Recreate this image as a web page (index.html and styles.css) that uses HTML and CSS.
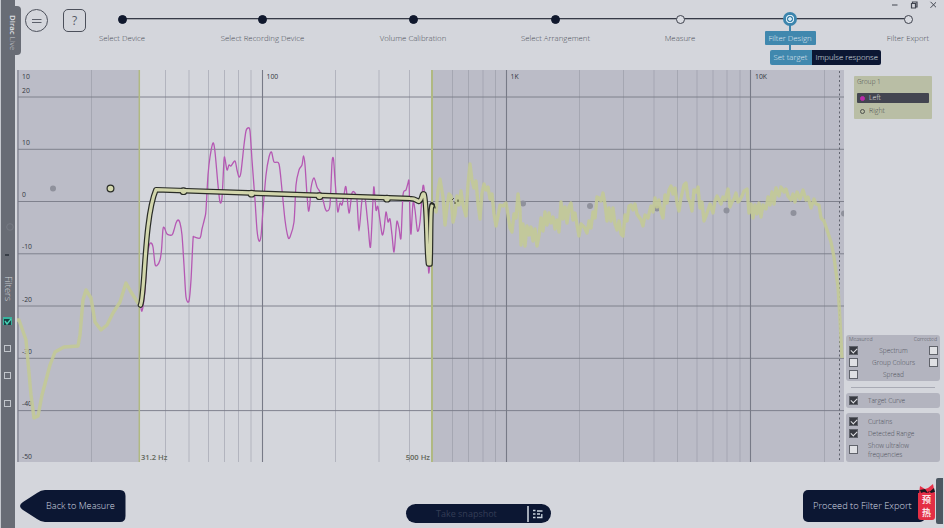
FILE: index.html
```html
<!DOCTYPE html>
<html lang="en">
<head>
<meta charset="utf-8">
<title>Dirac Live</title>
<link rel="stylesheet" href="styles.css">
</head>
<body>
<div class="app">
  <aside class="rail">
    <div class="brand"><b>Dirac</b> Live</div>
    <svg class="rail-marks" width="14" height="40" viewBox="0 0 14 40"><circle cx="9" cy="7" r="3.3" fill="none" stroke="#767a83"/><path d="M4 35h4" stroke="#292f39" stroke-width="1.5"/></svg>
    <div class="rail-title">Filters</div>
    <div class="slots">
      <span class="slot on"><svg width="9" height="9" viewBox="0 0 9 9"><path d="M1 2h7v6H1z" fill="#173f42"/><path d="M2 4l2 3 4-5" fill="none" stroke="#49d2b5" stroke-width="1.4"/></svg></span>
      <span class="slot"></span><span class="slot"></span><span class="slot"></span>
    </div>
  </aside>
  <div class="content">
    <header class="top">
      <div class="tools">
        <span class="tool round"><svg width="10" height="6" viewBox="0 0 10 6"><path d="M0 1.500h9.500M0 4.500h9.500" stroke="#5c606b" stroke-width="1.200"/></svg></span>
        <span class="tool">?</span>
      </div>
      <nav class="steps">
        <div class="step done"><i></i><span>Select Device</span></div>
        <div class="step done"><i></i><span>Select Recording Device</span></div>
        <div class="step done"><i></i><span>Volume Calibration</span></div>
        <div class="step done"><i></i><span>Select Arrangement</span></div>
        <div class="step"><i></i><span>Measure</span></div>
        <div class="step current"><i></i><span>Filter Design</span>
          <div class="tabs"><b>Set target</b><b class="dark">Impulse response</b></div>
        </div>
        <div class="step"><i></i><span>Filter Export</span></div>
      </nav>
      <svg class="window-buttons" width="46" height="10" viewBox="890 0 46 10" fill="none" stroke="#40444f"><path d="M892 5h5.500M930.500 1.800l6 6M936.500 1.800l-6 6"/><path d="M911.500 3.500h4v4.500h-4zM912.500 3V2h4.500v5h-1" stroke-width="1.200"/></svg>
    </header>
    <main class="workspace">
      <svg class="chart" width="827" height="392" viewBox="17 70 827 392">
        <path class="curtain" d="M17 70h122v392H17zM432 70h412v392H432z"/>
        <path class="minor" d="M91.500 70v392M165.500 70v392M189 70v392M208.500 70v392M224.500 70v392M238.500 70v392M251 70v392M335.500 70v392M379 70v392M409.500 70v392M452.500 70v392M468.500 70v392M483 70v392M495.500 70v392M579.500 70v392M623.500 70v392M654 70v392M677.500 70v392M697 70v392M713 70v392M727 70v392M740 70v392M824.500 70v392"/>
        <path class="major" d="M262.500 70v392M506.500 70v392M750.500 70v392M18 70v392"/>
        <path class="rows" d="M18 97h826M18 149.300h826M18 201.500h826M18 253.800h826M18 306h826M18 358.300h826M18 410.600h826"/>
        <path class="limit" d="M139.300 70v392"/><path class="limit wide" d="M432 70v392"/>
        <path class="nyquist" d="M839.500 71v391"/>
        <g class="points"><circle cx="53" cy="188.500" r="3"/><circle cx="523" cy="203.500" r="3"/><circle cx="590" cy="206" r="3"/><circle cx="657" cy="208.500" r="3"/><circle cx="726.500" cy="210.500" r="3"/><circle cx="793.500" cy="213" r="3"/><path d="M844 210.500a3 3 0 0 0 0 6z"/></g>
        <g class="scale">
          <text x="22" y="78.500">10</text><text x="22" y="92.500">20</text><text x="22" y="145">10</text><text x="22" y="197">0</text><text x="22" y="249">-10</text><text x="22" y="301.500">-20</text><text x="22" y="354">-30</text><text x="22" y="406">-40</text><text x="22" y="458.500">-50</text>
          <text x="266.500" y="78.500">100</text><text x="510.500" y="78.500">1K</text><text x="755" y="78.500">10K</text>
        </g>
        <path class="measured" d="M17 320L19 320L26 340L31 395L34 418L38 416L42 395L50 365L55 352L64 347L78 346L80 335L83 300L86 290L91 298L95 322L101 330L107 325L113 313L120 302L126 283L131 292L138 303L140 305"/>
        <path class="measured noisy" d="M434 207L436 212L438 190L440 179L443 197L445 225L447 207L449 194L451 196L453 222L455 214L457 196L459 205L461 191L463 205L466 216L468 184L470 164L472 180L474 188L476 181L478 204L480 219L482 193L484 184L486 190L488 187L490 199L492 194L494 214L496 226L498 216L500 205L503 206L506 203L508 215L510 228L512 232L514 214L516 218L518 194L520 210L521 245L523 224L525 246L527 226L529 235L531 227L533 241L535 229L537 246L539 236L541 218L543 231L545 212L547 225L549 213L551 223L553 217L555 229L557 220L559 232L561 202L563 219L565 207L567 223L569 207L571 203L573 220L575 213L577 225L579 236L581 224L584 227L587 233L589 221L591 228L593 212L595 218L597 197L599 198L601 201L603 193L605 204L607 221L609 208L611 221L613 208L615 224L617 230L619 221L621 234L623 236L625 215L627 221L629 206L631 205L633 210L635 204L637 214L639 217L641 220L643 226L645 215L648 218L651 206L653 212L655 198L657 207L659 200L661 212L663 218L665 195L667 203L669 190L671 186L673 194L675 188L677 203L679 211L681 198L684 185L686 183L688 198L690 202L692 211L694 190L696 192L698 187L700 208L702 202L704 221L706 216L708 210L710 204L713 213L715 201L717 196L719 200L721 204L723 197L725 200L728 189L730 207L732 202L734 199L736 193L738 202L740 200L742 196L744 191L747 189L749 213L751 204L753 218L755 205L757 214L759 203L761 217L763 205L766 209L768 197L770 205L772 192L774 204L776 188L779 196L781 187L784 192L786 189L788 196L791 200L793 194L795 202L797 192L800 199L803 190L806 200L808 197L811 208L814 199L816 204L819 205L821 218L824 221L828 233L831 242L834 257L838 287L840 320L842 358"/>
        <path class="left-channel" data-points="140,302 142,311 145,290 147,258 149,246 151,243 153,247 155,264 157,265.500 160,260 161.500,250 163,229 164.500,228 167,234 172,235 174,230 176,223 178,220 180,223 182,235 184,265 186,297 189,301 191,280 193,240 194,237 200,238 202,229 205,217 206,210 208,175 210,157 213,143 215,152 218,185 220,202 222,198 224,160 225,159 227,170 229,165 231,166 235,161 237,170 239,177 241,172 244,145 246,131 248,128 250,131 252,160 255,200 257,230 259,241 261,236 263,210 266,175 269,157 271.500,152 274,162 279,164 282,190 285,220 288,237 290,237 294,222 296,185 299,170 302,165 303.500,156 305,165 307,195 308.500,211 310,203 311,188 314,178 317,187 320,192 323,200 325,208 327,211 330,205 332,163 333.500,159 335,180 337,205 338,212 340,203 342,205 344,195 346,187 349,213 352,193 355,193 357,200 359,231 362,200 365,198 368,225 370.500,247 373,200 374,187 376,210 378,207 382,234 384,229 386,212 388,222 390,219 392,235 394,252 396,230 397,221 399,228 401,238 403,195 406,190 408,183 409,182 410,215 411,234 413,203 415,210 417.500,231 420,222 423,186 425,200 428,260 428.800,273 430,262"/>
        <g class="target">
          <path class="edge" d="M140.500 305C145 296 144 218 156 189.700L410 198.500C416 198.500 417 201 419 201.500C423 199 421.500 193 424 194C427 200 426.500 250 428.500 264H430C431 245 430 208 432 205"/>
          <g class="edge-dots"><circle cx="183.500" cy="191.200" r="3.300"/><circle cx="251.500" cy="193.700" r="3.300"/><circle cx="319.500" cy="196.200" r="3.300"/><circle cx="387" cy="198.700" r="3.300"/></g>
          <path class="core" d="M140.500 305C145 296 144 218 156 189.700L410 198.500C416 198.500 417 201 419 201.500C423 199 421.500 193 424 194C427 200 426.500 250 428.500 264H430C431 245 430 208 432 206"/>
          <path class="tail" d="M432.500 204Q434.500 204 435 208"/>
          <circle class="handle" cx="110.500" cy="188.500" r="3.400"/>
          <path class="ghost" d="M452.500 199.500l1-1M454.500 203h1M458 200v1.500"/>
        </g>
        <g class="limits"><text x="141" y="459.500">31.2 Hz</text><text x="430" y="459.500" text-anchor="end">500 Hz</text></g>
      </svg>
      <aside class="side">
        <section class="group">
          <h2>Group 1</h2>
          <div class="channel selected"><i></i>Left</div>
          <div class="channel"><i></i>Right</div>
        </section>
        <div class="options">
          <section class="card spectrum">
            <div class="heads"><span>Measured</span><span>Corrected</span></div>
            <div class="opt"><i class="box checked"></i><span>Spectrum</span><i class="box"></i></div>
            <div class="opt"><i class="box"></i><span>Group Colours</span><i class="box"></i></div>
            <div class="opt"><i class="box"></i><span>Spread</span></div>
          </section>
          <hr>
          <section class="card single"><div class="opt left"><i class="box checked"></i><span>Target Curve</span></div></section>
          <section class="card view">
            <div class="opt left"><i class="box checked"></i><span>Curtains</span></div>
            <div class="opt left"><i class="box checked"></i><span>Detected Range</span></div>
            <div class="opt left tall"><i class="box"></i><span>Show ultralow frequencies</span></div>
          </section>
        </div>
      </aside>
    </main>
    <footer class="actions">
      <div class="back"><svg width="106" height="34" viewBox="0 0 106 34"><path d="M25 1H100Q105.500 1 105.500 7V27Q105.500 33 100 33H25Q21 33 17 30L3 21Q-3 17 3 13L17 4Q21 1 25 1z" fill="#0c1733"/></svg><span>Back to Measure</span></div>
      <div class="snapshot"><span>Take snapshot</span><svg width="23" height="18" viewBox="0 0 23 18"><path d="M1 1v16" stroke="#d4dde5" stroke-width="1.500"/><path d="M6 5.500h2.500M6 9h2.500M6 12.500h2.500M10 6h5.500M10 9h3M10 12.500h5.500M14.800 9v3.500" fill="none" stroke="#c9d4dd" stroke-width="1.300"/></svg></div>
      <div class="proceed"><span>Proceed to Filter Export</span></div>
      <div class="sticker"><svg width="19" height="10" viewBox="0 0 19 10"><path d="M1 10L2 2l5 3 3-1 5-4 2 10z" fill="#e82f48"/><path d="M2 6l5-1 3 4 6-5 1 4-4 1-2-2-2 2-3-1-3 1z" fill="#17171e"/></svg><b><span>预</span><span>热</span></b></div>
      <div class="edge-tab"></div>
    </footer>
  </div>
</div>
<script src="chart.js"></script>
</body>
</html>
```

FILE: chart.js
```js
// Draw a smooth curve through the measured points of the left channel.
const trace = document.querySelector('.left-channel');
const pts = trace.dataset.points.split(' ').map(p => p.split(',').map(Number));
let d = `M${pts[0]}`;
for (let i = 0; i < pts.length - 1; i++) {
  const a = pts[Math.max(i - 1, 0)], b = pts[i], c = pts[i + 1];
  const e = pts[Math.min(i + 2, pts.length - 1)];
  const k = 7;
  d += `C${b[0] + (c[0] - a[0]) / k} ${b[1] + (c[1] - a[1]) / k} ` +
       `${c[0] - (e[0] - b[0]) / k} ${c[1] - (e[1] - b[1]) / k} ${c[0]} ${c[1]}`;
}
trace.setAttribute('d', d);
```

FILE: styles.css
```css
* { box-sizing: border-box; }
body { margin: 0; background: #d4d6dc; font-family: "Open Sans", "Noto Sans", sans-serif; font-weight: 300; color: #4b4e58; }
.app { display: flex; width: 944px; height: 528px; overflow: hidden; }
.rail { position: relative; width: 15px; border-left: 1px solid #c5c8ce; background: #686c75; flex: none; display: flex; flex-direction: column; align-items: center; padding-top: 220px; z-index: 2; }
.brand { position: absolute; left: 5px; top: 6px; width: 15px; height: 49px; background: #686c75; border-radius: 0 4px 4px 0; writing-mode: vertical-rl; font-size: 7.800px; line-height: 15px; padding-top: 9px; color: #c8cbd1; padding-right: 1px; white-space: nowrap; }
.brand b { font-weight: 600; color: #e0e2e6; }
.rail-marks { flex: none; }
.rail-title { writing-mode: vertical-rl; font-size: 9.300px; line-height: 14px; color: #d0d3d8; margin-top: 16px; height: 34px; }
.slots { margin-top: 8px; margin-right: 2px; display: flex; flex-direction: column; gap: 20.500px; }
.slot { width: 7px; height: 7px; border: 1px solid #c1c5cb; }
.slot.on { width: 9px; height: 8px; margin: -1px; border: 0; background: #38b39e; display: flex; }
.content { width: 929px; flex: none; display: flex; flex-direction: column; }
.top { position: relative; display: flex; height: 70px; flex: none; }
.tools { display: flex; gap: 15px; width: 67px; padding: 9px 0 0 10px; flex: none; }
.tool { width: 23px; height: 23px; flex: none; border: 1.500px solid #4c505b; border-radius: 5px; display: flex; align-items: center; justify-content: center; font-size: 12px; font-weight: 400; color: #555966; }
.tool.round { border-radius: 50%; }
.steps { position: relative; display: grid; grid-template-columns: 80px 201px 100px 185px 64px 156px 80px; flex: none; }
.steps::before { content: ""; position: absolute; left: 40px; width: 786px; top: 18px; height: 1px; background: #363a47; box-shadow: 0 .5px #72767f; }
.step { position: relative; display: flex; flex-direction: column; align-items: center; font-size: 7.800px; line-height: 14px; white-space: nowrap; }
.step i { width: 9px; height: 9px; margin: 15px 0 7px; border: 1.500px solid #3f434e; border-radius: 50%; background: #dadce2; position: relative; flex: none; }
.step.done i { background: #10182d; border-color: #10182d; }
.step.current i { width: 14px; height: 14px; margin: 12px 0 5px; border: 2px solid #3c85ad; background: radial-gradient(circle, #d8eaf4 0 1.500px, #3c85ad 2px 2.800px, #d8eaf4 3.200px 4px, #3c85ad 4.500px); }
.step.current::before { content: ""; position: absolute; left: 77px; top: 25px; width: 2px; height: 27px; background: #3c85ad; }
.step.current > span { position: relative; background: #4088ae; border-radius: 1px; color: #e0ebf2; width: 51px; text-align: center; height: 14px; }
.tabs { margin: 5px 0 0 70px; display: flex; height: 15px; line-height: 15px; color: #e0e8ee; }
.tabs b { width: 42px; padding-left: 4px; font-weight: 300; background: #4088ae; border-radius: 2px 0 0 2px; }
.tabs .dark { width: 69px; background: #0c1733; border-radius: 0 2px 2px 0; }
.window-buttons { position: absolute; left: 875px; top: 0; }
.workspace { display: flex; height: 392px; flex: none; padding-left: 2px; }
.chart { flex: none; display: block; }
.curtain { fill: #bbbcc7; }
.minor, .major, .rows { fill: none; stroke: #8d909d; }
.minor { stroke-width: .8; opacity: .6; }
.major { stroke: #777a87; stroke-width: 1.100; }
.rows { stroke: #787b87; stroke-width: .9; }
.limit { fill: none; stroke: #b0b982; stroke-width: 1.500; }
.wide { stroke-width: 2; }
.nyquist { stroke: #60636e; stroke-dasharray: 2 2.500; stroke-width: 1; }
.points { fill: #8f919c; }
.scale { font: 400 6.800px "Open Sans", sans-serif; fill: #343741; }
.limits { font: 600 7.600px "Open Sans", sans-serif; fill: #62675a; }
.measured { fill: none; stroke: #c3c996; stroke-width: 3.400; stroke-linejoin: round; opacity: .9; }
.noisy { stroke-width: 3.300; }
.left-channel { fill: none; stroke: #b558b3; stroke-width: 1.300; stroke-linejoin: round; }
.target path { fill: none; stroke-linecap: round; stroke-linejoin: round; }
.target .edge { stroke: #292c27; stroke-width: 5.600; }
.edge-dots { fill: #d2d6ac; stroke: #292c27; stroke-width: 1.200; }
.target .core { stroke: #d2d6ac; stroke-width: 3.200; }
.target .tail { stroke: #292c27; stroke-width: 1.200; }
.handle { fill: #d2d6ac; stroke: #292c27; stroke-width: 1.200; }
.target .ghost { stroke: #353823; stroke-width: 1; }
.side { width: 100px; flex: none; display: flex; flex-direction: column; justify-content: space-between; }
.group { width: 78px; height: 43px; margin: 6px 0 0 10px; background: #b9bea5; padding: 0 3px; border-radius: 1px; font-size: 7px; color: #4c4f50; }
.group h2 { font-size: 6.400px; font-weight: 300; line-height: 12px; margin: 0 0 5px; }
.channel { display: flex; align-items: center; gap: 4px; height: 10px; line-height: 10px; padding-left: 3px; border-radius: 1px; }
.channel i { width: 5px; height: 5px; border: 1px solid #4d504c; border-radius: 50%; }
.channel.selected { background: #434550; color: #e2e4e7; margin-bottom: 3px; }
.selected i { background: #b82baa; border-color: #b82baa; }
.options { width: 94px; margin-left: 2px; }
.card { background: #b3b4bf; border-radius: 3px; font-size: 6.500px; }
.spectrum { height: 46px; }
.heads { display: flex; justify-content: space-between; font-size: 5.200px; line-height: 8px; padding: 0 3px; height: 9px; }
.opt { display: grid; grid-template-columns: 9px 62px 9px; column-gap: 4.500px; padding-left: 3px; height: 12.200px; align-items: center; text-align: center; }
.opt.left { grid-template-columns: 9px 60px; column-gap: 10px; text-align: left; }
.box { width: 9px; height: 9px; border: 1px solid #60636b; background: #dfe0e4; display: block; }
.checked { background: #383a41; position: relative; }
.checked::after { content: ""; position: absolute; left: 1px; top: 1px; width: 5px; height: 3px; border-left: 1.500px solid #dfe0e4; border-bottom: 1.500px solid #dfe0e4; transform: rotate(-45deg); }
hr { border: 0; height: 1px; background: #a8aab4; margin: 5.500px 5px 5.500px; }
.single { height: 15px; padding-top: 1.500px; margin-bottom: 5px; }
.view { height: 49px; padding-top: 2px; }
.opt.tall { height: 21px; line-height: 9px; }
.actions { position: relative; height: 66px; display: flex; align-items: flex-start; flex: none; padding-left: 5px; }
.back { display: grid; width: 106px; margin-top: 27px; flex: none; font-size: 9.200px; line-height: 34px; color: #d5dae2; }
.back > * { grid-area: 1 / 1; }
.back span { padding-left: 26px; white-space: nowrap; }
.snapshot { width: 145px; height: 19px; margin: 42px 0 0 280px; background: #0c1733; border-radius: 10px; flex: none; display: flex; align-items: center; font-size: 9px; color: #343d56; font-weight: 400; }
.snapshot span { width: 121px; padding-left: 30px; white-space: nowrap; }
.snapshot svg { flex: none; }
.proceed { width: 122px; height: 32px; margin: 28px 0 0 252px; background: #0c1733; border-radius: 5px; flex: none; line-height: 32px; padding-left: 10px; font-size: 9.300px; white-space: nowrap; color: #d5dae2; }
.sticker { position: absolute; left: 903px; top: 22px; width: 18px; height: 36px; }
.sticker svg { display: block; }
.sticker b { display: flex; flex-direction: column; align-items: center; margin-top: -1px; height: 27px; width: 17px; background: #e42f45; border-radius: 0 0 3px 3px; color: #fbe5e7; font: 700 9px/13px "Noto Sans CJK SC", sans-serif; }
.edge-tab { position: absolute; left: 921px; top: 16px; width: 7px; height: 46px; background: #4b5761; border-radius: 2px 0 0 2px; }
```
